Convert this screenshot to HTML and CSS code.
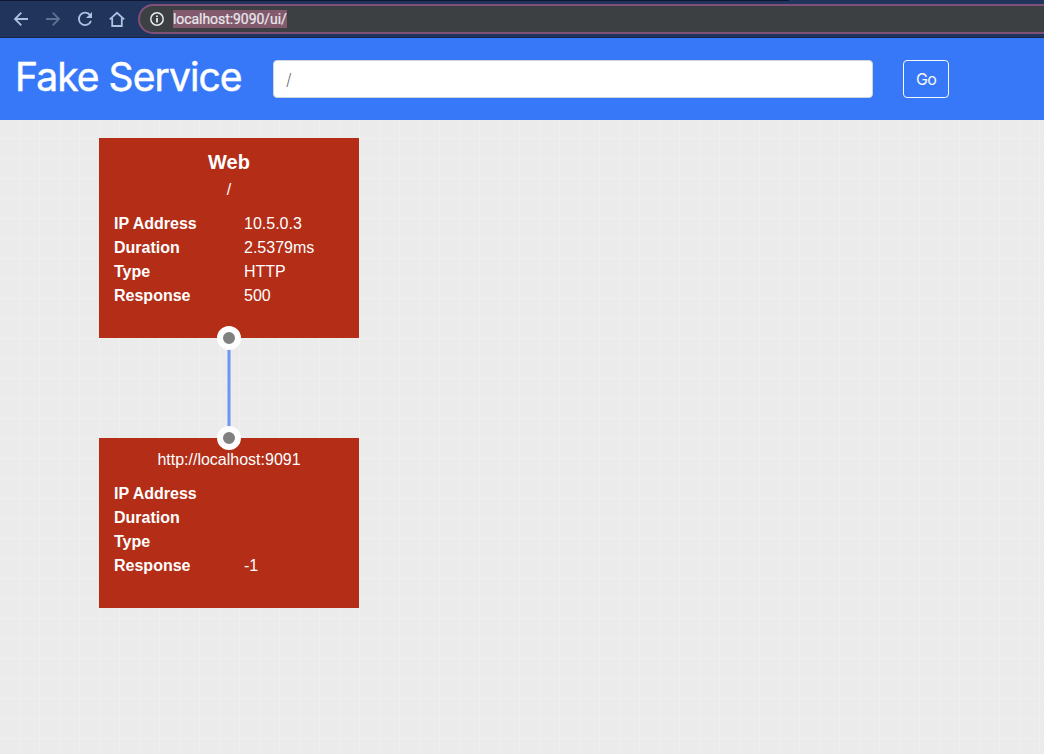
FILE: index.html
```html
<!DOCTYPE html>
<html lang="en">
<head>
<meta charset="utf-8">
<title>Fake Service</title>
<link rel="stylesheet" href="styles.css">
</head>
<body>
<div class="toolbar">
  <svg class="nav-icons" width="138" height="38" viewBox="0 0 138 38" fill="none" stroke="#acc0e2" stroke-width="1.8">
    <path d="M28 19H15.2M21.3 12.7L15 19l6.3 6.3"/>
    <path d="M46 19h12.8M52.7 12.7L59 19l-6.3 6.3" stroke="#5f7195"/>
    <path d="M90.2 15.3A6.2 6.2 0 1 0 91 20.9"/>
    <path d="M92 12v6h-6z" fill="#acc0e2" stroke="none"/>
    <path d="M109.8 19.4L117 12.8l7.2 6.6M112.2 18v8h9.6v-8"/>
  </svg>
  <div class="address">
    <svg class="info" width="16" height="16" viewBox="0 0 16 16">
      <circle cx="8" cy="8" r="6.2" fill="none" stroke="#e8eaed" stroke-width="1.5"/>
      <path d="M7.1 4.4h1.8v1.7H7.1zM7.1 7.1h1.8v4.5H7.1z" fill="#e8eaed"/>
    </svg>
    <span class="url">localhost:9090/ui/</span>
  </div>
</div>
<header class="header">
  <h1 class="brand">Fake Service</h1>
  <input class="path" type="text" placeholder="/">
  <button class="go" type="button">Go</button>
</header>
<main class="canvas">
  <section class="node">
    <h2 class="name">Web</h2>
    <p class="uri">/</p>
    <dl class="facts">
      <dt>IP Address</dt><dd>10.5.0.3</dd>
      <dt>Duration</dt><dd>2.5379ms</dd>
      <dt>Type</dt><dd>HTTP</dd>
      <dt>Response</dt><dd>500</dd>
    </dl>
    <span class="port port-out"></span>
  </section>
  <div class="link"></div>
  <section class="node upstream">
    <p class="uri">http://localhost:9091</p>
    <dl class="facts">
      <dt>IP Address</dt><dd></dd>
      <dt>Duration</dt><dd></dd>
      <dt>Type</dt><dd></dd>
      <dt>Response</dt><dd>-1</dd>
    </dl>
    <span class="port port-in"></span>
  </section>
</main>
</body>
</html>
```

FILE: styles.css
```css
* { box-sizing: border-box; }
body {
  margin: 0;
  height: 754px;
  display: flex;
  flex-direction: column;
  overflow: hidden;
  font: 16px/24px "Liberation Sans", Arial, sans-serif;
}
.toolbar {
  flex: none;
  height: 38px;
  display: flex;
  align-items: flex-start;
  background:
    linear-gradient(#0d1733, #0d1733) 0 0 / 789px 1px no-repeat,
    linear-gradient(#172646, #172646) 0 37px / 100% 1px no-repeat,
    #21345b;
}
.nav-icons { flex: none; }
.address {
  flex: 1;
  height: 30px;
  margin-top: 4px;
  padding-left: 9px;
  display: flex;
  align-items: center;
  border: 2px solid #7f5179;
  border-right: 0;
  border-radius: 15px 0 0 15px;
  background: #3c4043;
}
.info { margin-right: 8px; }
.url {
  height: 18px;
  background: #835a6d;
  color: #e8eaed;
  font: 14px/18px Roboto, sans-serif;
  letter-spacing: -.06px;
  -webkit-text-stroke: .2px #e8eaed;
}
.header {
  flex: none;
  height: 82px;
  padding: 0 15px;
  display: flex;
  align-items: center;
  background: #3778f9;
}
.brand {
  width: 258px;
  margin: 0;
  padding-bottom: 5px;
  color: #fff;
  font: 400 39px/48px Inter, sans-serif;
  letter-spacing: -.92px;
  -webkit-text-stroke: .5px #fff;
  white-space: nowrap;
}
.path {
  width: 600px;
  height: 38px;
  padding: 6px 12px;
  border: 1px solid #ced4da;
  border-radius: 4px;
  background: #fff;
  font: 300 16px/24px Inter, sans-serif;
}
.path::placeholder { color: #6c757d; opacity: 1; }
.go {
  width: 46px;
  height: 38px;
  margin-left: 30px;
  padding: 0;
  border: 1px solid #f8f9fa;
  border-radius: 4px;
  background: transparent;
  color: #f8f9fa;
  font: 400 16px/24px Inter, sans-serif;
  letter-spacing: -.7px;
}
.canvas {
  flex: 1;
  padding: 18px 0 0 99px;
  background-color: #ebebeb;
  background-image:
    linear-gradient(90deg, #efefef 1px, transparent 1px),
    linear-gradient(#efefef 1px, transparent 1px);
  background-size: 20px 20px;
  background-position: 19px 18px;
}
.node {
  position: relative;
  width: 260px;
  height: 200px;
  padding: 12px 15px 0;
  background: #b32d17;
  color: #fff;
}
.upstream { height: 170px; padding-top: 10px; }
.name {
  margin: 0 0 4px;
  text-align: center;
  font-size: 20px;
  line-height: 24px;
}
.uri { margin: 0 0 10px; text-align: center; }
.facts {
  margin: 0;
  display: grid;
  grid-template-columns: 130px 1fr;
  grid-auto-rows: 24px;
}
.facts dt { font-weight: 700; }
.facts dd { margin: 0; }
.port {
  position: absolute;
  left: 118px;
  width: 24px;
  height: 24px;
  border: 6px solid #fff;
  border-radius: 50%;
  background: #808080;
}
.port-out { bottom: -12px; }
.port-in { top: -12px; }
.link {
  width: 4px;
  height: 100px;
  margin-left: 128px;
  background: linear-gradient(90deg, #a9bfef 1px, #6f97eb 1px, #6f97eb 3px, #a9bfef 3px);
}
```
